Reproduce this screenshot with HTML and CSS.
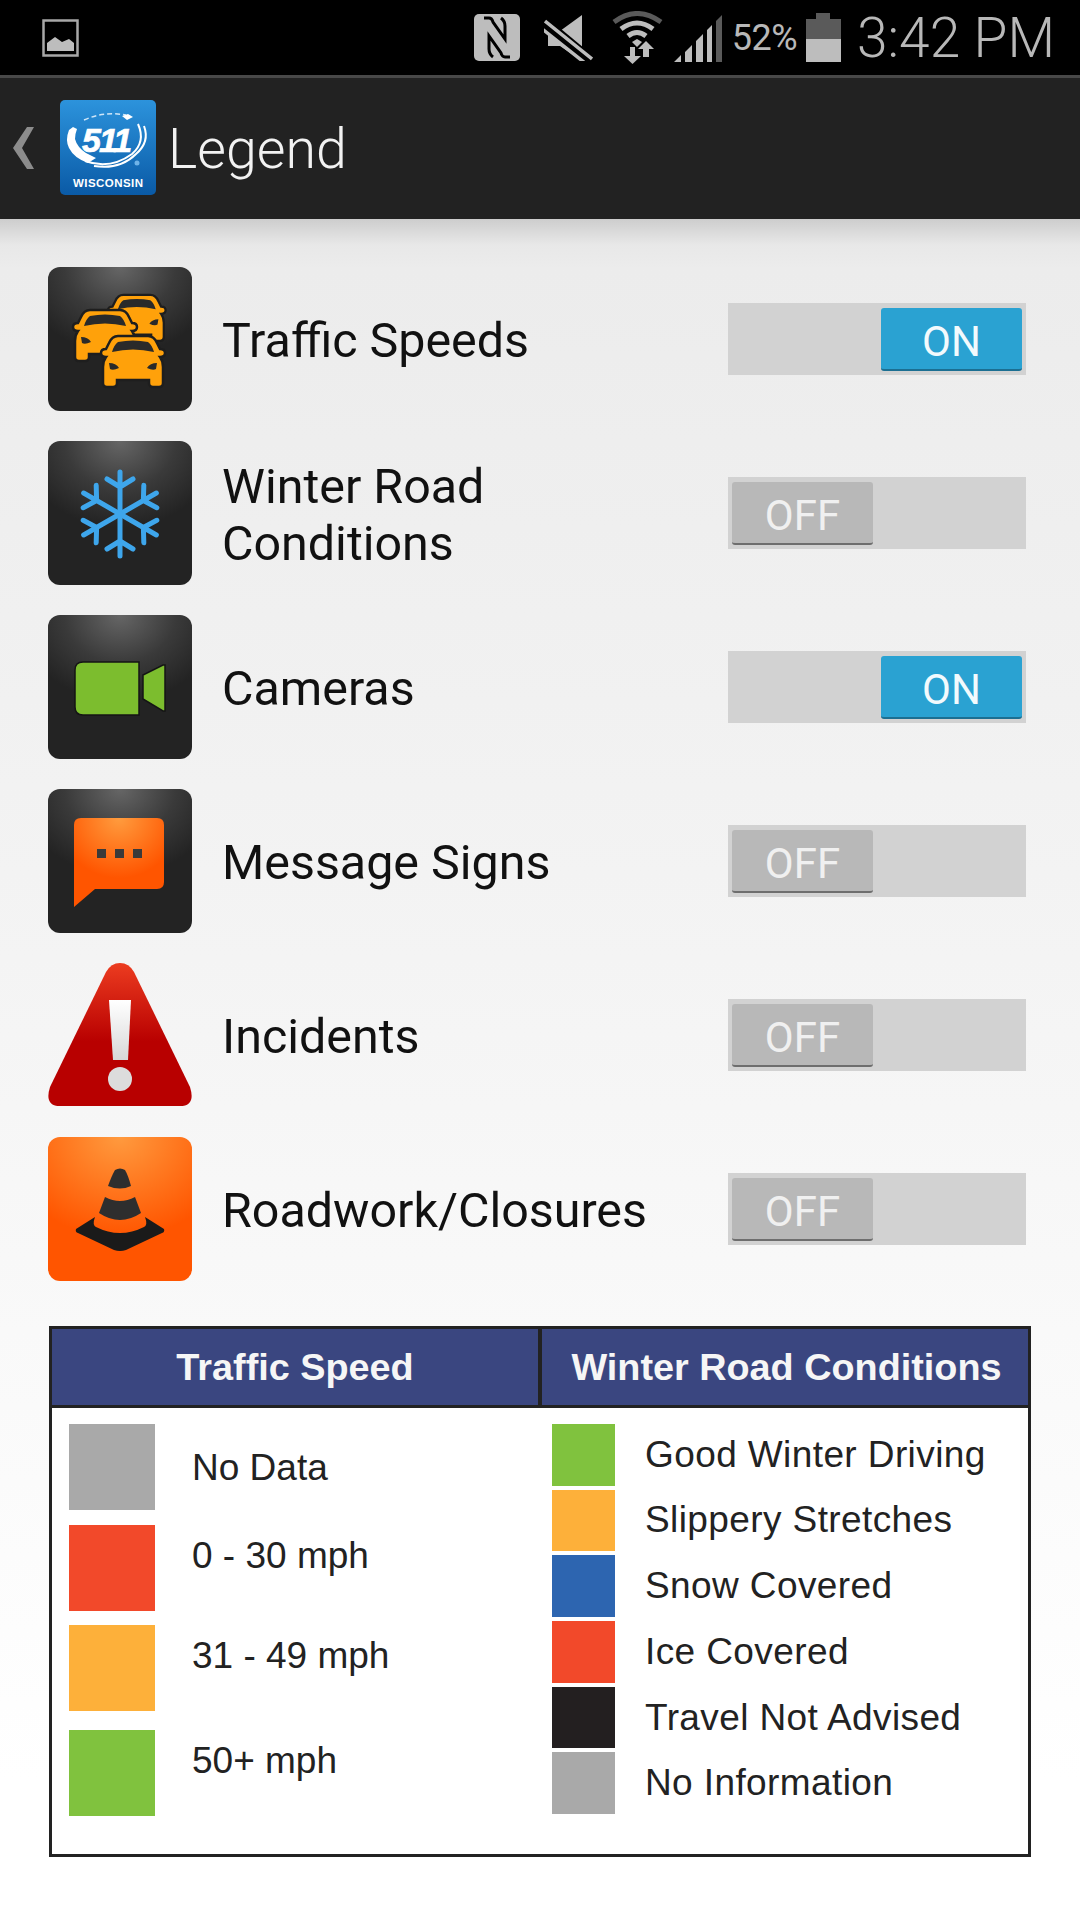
FILE: index.html
```html
<!DOCTYPE html>
<html>
<head>
    <title>511 Wisconsin – Legend</title>
    <link rel="stylesheet" href="styles.css">
</head>
<body>
    <div class="status-bar">
        <svg class="st-gallery" width="37" height="38" viewBox="0 0 37 38">
            <rect x="1.5" y="1.5" width="34" height="35" fill="none" stroke="#a8a8a8" stroke-width="2.5"/>
            <path d="M5 32 V24 L13 18 L20 23 L27 20 L32 24 V32Z" fill="#bdbdbd"/>
        </svg>
        <div class="st-spacer"></div>
        <svg class="st-nfc" width="46" height="47" viewBox="0 0 46 47">
            <rect width="46" height="47" rx="5" fill="#bdbdbd"/>
            <path d="M10 4 H15 Q18 4 19 8 L31 25 V12 Q31 7 27 4 M36 43 H31 Q28 43 27 39 L15 22 V35 Q15 40 19 43" fill="none" stroke="#000" stroke-width="3"/>
        </svg>
        <svg class="st-mute" width="49" height="47" viewBox="0 0 49 47">
            <path d="M4 17 H16 L38 1 V47 L16 32 H4Z" fill="#bdbdbd"/>
            <path d="M0 8 L47 47" stroke="#000" stroke-width="11"/>
            <path d="M1 7 L48 45 M-3 14 L41 49" stroke="#bdbdbd" stroke-width="3.5"/>
        </svg>
        <svg class="st-wifi" width="51" height="53" viewBox="0 0 51 53">
            <path d="M2 11 Q25 -6 49 11" fill="none" stroke="#5a5a5a" stroke-width="5"/>
            <path d="M9 18 Q25 6 41 18" fill="none" stroke="#bdbdbd" stroke-width="5"/>
            <path d="M16 25 Q25 18 34 25" fill="none" stroke="#bdbdbd" stroke-width="5"/>
            <path d="M20 31 L25 28 L30 31 L25 36Z" fill="#bdbdbd"/>
            <path d="M18 36 H23 V45 H29 L20.500 53 L12 45 H18Z M31 46 V38 H26 L34 30 L42 38 H37 V46Z" fill="#bdbdbd"/>
        </svg>
        <svg class="st-signal" width="48" height="48" viewBox="0 0 48 48">
            <path d="M0 48 L7 41 V48Z M11 38 L18 31 V48 H11Z M22 27 L29 20 V48 H22Z M33 16 L38 11 V48 H33Z" fill="#bdbdbd"/>
            <path d="M42 7 L48 1 V48 H42Z" fill="#5a5a5a"/>
        </svg>
        <span class="st-pct">52%</span>
        <svg class="st-battery" width="35" height="49" viewBox="0 0 35 49">
            <path d="M10 0 H24 V6 H35 V26 H0 V6 H10Z" fill="#5a5a5a"/>
            <rect y="26" width="35" height="23" fill="#bdbdbd"/>
        </svg>
        <span class="st-time">3:42 PM</span>
    </div>

    <div class="action-bar">
        <svg class="back" width="21" height="42" viewBox="0 0 21 42">
            <path d="M14 0 H21 L9 21 L21 42 H14 L0 21Z" fill="#8c8c8c"/>
        </svg>
        <svg class="logo" width="96" height="95" viewBox="0 0 96 95">
            <defs>
                <linearGradient id="logoBg" x1="0" y1="0" x2="0" y2="1">
                    <stop offset="0" stop-color="#2c93dc"/>
                    <stop offset="1" stop-color="#0a5aa6"/>
                </linearGradient>
            </defs>
            <rect width="96" height="95" rx="5" fill="url(#logoBg)"/>
            <path d="M24 20 Q44 11 66 15" fill="none" stroke="#cfe6f8" stroke-width="1.500" stroke-dasharray="5 3"/>
            <path d="M62 16 L68 14 L73 17 L67 20Z" fill="#fff"/>
            <path d="M9 30 Q5 40 9 48 Q14 58 28 63 L36 58 L26 53 Q17 47 15 39 Q15 34 17 29 L13 27Z" fill="#fff"/>
            <path d="M25 61 Q50 70 72 54 Q86 42 78 24 M34 66 Q60 70 76 54 Q90 42 84 26" fill="none" stroke="#fff" stroke-width="2"/>
            <text class="logo-num" x="22" y="52">511</text>
            <circle cx="77" cy="63" r="2.500" fill="#6fb3e8"/>
            <text class="logo-name" x="13" y="87" textLength="70">WISCONSIN</text>
        </svg>
        <span class="title">Legend</span>
    </div>

    <div class="content">
        <div class="layer">
            <div class="tile">
                <svg width="144" height="144" viewBox="0 0 144 144">
                    <defs>
                        <g id="car">
                            <path d="M17 1 H47 Q53 1 56 8 L59 14 Q64 14 64 18 Q64 22 59 22 Q62 26 62 32 V48 Q62 52 58 52 H52 Q48 52 48 48 V45 H16 V48 Q16 52 12 52 H6 Q2 52 2 48 V32 Q2 26 5 22 Q0 22 0 18 Q0 14 5 14 L8 8 Q11 1 17 1Z" fill="#ffa10a" stroke="#1e1e1e" stroke-width="2.500"/>
                            <path d="M17 7 Q32 4 47 7 Q51 10 53 17 Q32 12 11 17 Q13 10 17 7Z" fill="#2a2a2a"/>
                            <path d="M8 28 Q15 28 18 33 Q12 36 9 34Z M56 28 Q49 28 46 33 Q52 36 55 34Z" fill="#2a2a2a"/>
                        </g>
                    </defs>
                    <use href="#car" transform="translate(60 27) scale(.9)"/>
                    <use href="#car" transform="translate(25 42)"/>
                    <use href="#car" transform="translate(53 68)"/>
                </svg>
            </div>
            <span class="layer-name">Traffic Speeds</span>
            <div class="toggle on"><span class="thumb">ON</span></div>
        </div>

        <div class="layer">
            <div class="tile">
                <svg width="144" height="144" viewBox="0 0 144 144">
                    <defs>
                        <path id="arm" d="M0 0 V-42 M-13 -35 L0 -27 L13 -35" fill="none" stroke="#3ea6ec" stroke-width="5" stroke-linecap="round" stroke-linejoin="round"/>
                    </defs>
                    <g transform="translate(72 73)">
                        <use href="#arm"/>
                        <use href="#arm" transform="rotate(60)"/>
                        <use href="#arm" transform="rotate(120)"/>
                        <use href="#arm" transform="rotate(180)"/>
                        <use href="#arm" transform="rotate(240)"/>
                        <use href="#arm" transform="rotate(300)"/>
                    </g>
                </svg>
            </div>
            <span class="layer-name">Winter Road<br>Conditions</span>
            <div class="toggle"><span class="thumb">OFF</span></div>
        </div>

        <div class="layer">
            <div class="tile">
                <svg width="144" height="144" viewBox="0 0 144 144">
                    <path d="M35 47 H91 V100 H35 Q27 100 27 92 V55 Q27 47 35 47Z M95 60 L115 50 H117 V96 H115 L95 84Z" fill="#7cbd2e" stroke="#151515" stroke-width="1.500"/>
                </svg>
            </div>
            <span class="layer-name">Cameras</span>
            <div class="toggle on"><span class="thumb">ON</span></div>
        </div>

        <div class="layer">
            <div class="tile">
                <svg width="144" height="144" viewBox="0 0 144 144">
                    <defs>
                        <radialGradient id="msgBg" cx=".5" cy="0" r=".9">
                            <stop offset="0" stop-color="#ff9c3e"/>
                            <stop offset=".75" stop-color="#ff5500"/>
                        </radialGradient>
                    </defs>
                    <path d="M33 29 H109 Q116 29 116 36 V93 Q116 100 109 100 H47 L26 118 V36 Q26 29 33 29Z" fill="url(#msgBg)"/>
                    <path d="M49 60 H58 V69 H49Z M67 60 H76 V69 H67Z M85 60 H94 V69 H85Z" fill="#3a3a3a"/>
                </svg>
            </div>
            <span class="layer-name">Message Signs</span>
            <div class="toggle"><span class="thumb">OFF</span></div>
        </div>

        <div class="layer">
            <svg class="bare-icon" width="144" height="144" viewBox="0 0 144 144">
                <defs>
                    <linearGradient id="warnBg" x1="0" y1="0" x2="0" y2="1">
                        <stop offset="0" stop-color="#ec3c20"/>
                        <stop offset=".55" stop-color="#b80000"/>
                    </linearGradient>
                    <linearGradient id="warnBar" x1="0" y1="0" x2="0" y2="1">
                        <stop offset="0" stop-color="#fff"/>
                        <stop offset="1" stop-color="#d8d8d8"/>
                    </linearGradient>
                </defs>
                <path d="M72 0 Q81 0 86 9 L142 124 Q148 143 132 143 H12 Q-4 143 2 124 L58 9 Q63 0 72 0Z" fill="url(#warnBg)"/>
                <path d="M61 37 H83 L80 97 H65Z" fill="url(#warnBar)"/>
                <circle cx="72" cy="116" r="12" fill="#dcdcdc"/>
            </svg>
            <span class="layer-name">Incidents</span>
            <div class="toggle"><span class="thumb">OFF</span></div>
        </div>

        <div class="layer">
            <div class="tile tile-orange">
                <svg width="144" height="144" viewBox="0 0 144 144">
                    <path d="M67 33 Q72 30 77 33 Q80 38 83 49 Q72 54 60 49 Q64 38 67 33Z" fill="#2e2e2e"/>
                    <path d="M57 60 Q72 68 87 60 L93 76 Q72 90 51 76Z" fill="#2e2e2e"/>
                    <path d="M47 80 L28 92 Q27 95 30 96 L66 113 Q72 115 78 113 L114 96 Q117 95 116 92 L97 80 Q100 88 96 90 Q72 102 48 90 Q44 88 47 80Z" fill="#1a1a1a"/>
                </svg>
            </div>
            <span class="layer-name">Roadwork/Closures</span>
            <div class="toggle"><span class="thumb">OFF</span></div>
        </div>

        <div class="key">
            <div class="key-head">
                <div class="key-title speed-col">Traffic Speed</div>
                <div class="key-title winter-col">Winter Road Conditions</div>
            </div>
            <div class="key-body">
                <div class="speed-list">
                    <div class="speed-row"><span class="swatch-lg grey"></span><span class="speed-text first">No Data</span></div>
                    <div class="speed-row"><span class="swatch-lg red"></span><span class="speed-text">0 - 30 mph</span></div>
                    <div class="speed-row"><span class="swatch-lg orange"></span><span class="speed-text">31 - 49 mph</span></div>
                    <div class="speed-row wide"><span class="swatch-lg green"></span><span class="speed-text">50+ mph</span></div>
                </div>
                <div class="winter-list">
                    <div class="winter-row"><span class="swatch-sm green"></span>Good Winter Driving</div>
                    <div class="winter-row"><span class="swatch-sm orange"></span>Slippery Stretches</div>
                    <div class="winter-row"><span class="swatch-sm blue"></span>Snow Covered</div>
                    <div class="winter-row"><span class="swatch-sm red"></span>Ice Covered</div>
                    <div class="winter-row"><span class="swatch-sm black"></span>Travel Not Advised</div>
                    <div class="winter-row"><span class="swatch-sm grey"></span>No Information</div>
                </div>
            </div>
        </div>
    </div>
</body>
</html>
```

FILE: styles.css
```css
* {
    box-sizing: border-box;
}

body {
    margin: 0;
    height: 1920px;
    overflow: hidden;
    background: #fff;
    font-family: Roboto, sans-serif;
}

/* status bar */
.status-bar {
    display: flex;
    align-items: center;
    height: 75px;
    padding: 0 25px 0 42px;
    background: #000;
    color: #b8b8b8;
}

.status-bar svg {
    flex: none;
}

.st-spacer {
    flex: 1;
}

.st-mute {
    margin-left: 24px;
}

.st-wifi {
    margin-left: 19px;
}

.st-signal {
    margin-left: 11px;
}

.st-pct {
    margin-left: 10px;
    font-size: 36px;
    letter-spacing: -.5px;
}

.st-battery {
    margin-left: 9px;
}

.st-time {
    margin-left: 16px;
    font-size: 55px;
    font-weight: 300;
}

/* action bar */
.action-bar {
    display: flex;
    align-items: center;
    height: 144px;
    padding: 0 0 2px 13px;
    background: #222;
    border-top: 3px solid #484848;
}

.logo {
    margin-left: 26px;
}

.logo-num {
    font-family: "Liberation Sans", sans-serif;
    font-size: 34px;
    font-weight: bold;
    font-style: italic;
    letter-spacing: -2px;
    fill: #fff;
    stroke: #fff;
    stroke-width: .7px;
}

.logo-name {
    font-family: "Liberation Sans", sans-serif;
    font-size: 11.5px;
    font-weight: bold;
    fill: #fff;
}

.title {
    margin-left: 12px;
    padding-top: 4px;
    font-size: 55.5px;
    font-weight: 300;
    color: #f2f2f2;
}

/* layers */
.content {
    height: 1701px;
    padding: 48px 0 0 48px;
    background: linear-gradient(#cdcdcd 0, #e8e8e8 26px, #ececec 50px, #f4f4f4 740px, #fff 1560px);
}

.layer {
    display: flex;
    align-items: center;
    height: 144px;
    margin-bottom: 30px;
}

.tile {
    flex: none;
    width: 144px;
    height: 144px;
    border-radius: 12px;
    background: radial-gradient(ellipse 70% 60% at 50% 0, #666 0, #3a3a3a 55%, #232323 100%);
}

.tile-orange {
    background: radial-gradient(ellipse 80% 70% at 50% 0, #ff9a3e 0, #ff5500 100%);
}

.tile svg,
.bare-icon {
    display: block;
    flex: none;
}

.layer-name {
    flex: 1;
    margin-left: 30px;
    padding-top: 5px;
    font-size: 48.4px;
    line-height: 56.5px;
    color: #111;
}

.toggle {
    display: flex;
    flex: none;
    align-items: center;
    width: 298px;
    height: 72px;
    margin-right: 54px;
    padding: 0 4px;
    background: #d2d2d2;
}

.toggle.on {
    justify-content: flex-end;
}

.thumb {
    width: 141px;
    height: 63px;
    border-radius: 3px;
    background: #b8b8b8;
    border-bottom: 2px solid #6e6e6e;
    font-size: 42px;
    line-height: 67px;
    text-align: center;
    color: #f0f0f0;
}

.on .thumb {
    background: #2aa2d2;
    border-bottom-color: #1b6f92;
    color: #f2fafd;
}

/* colour key */
.key {
    width: 982px;
    height: 531px;
    margin: 45px 0 0 1px;
    border: 3px solid #222;
    background: #fff;
    font-family: "Liberation Sans", sans-serif;
}

.key-head {
    display: flex;
    height: 79px;
    border-bottom: 3px solid #222;
    background: #3a4680;
}

.key-title {
    font-size: 37.8px;
    font-weight: bold;
    line-height: 76px;
    text-align: center;
    color: #f6f6f6;
}

.speed-col {
    width: 490px;
    border-right: 4px solid #222;
}

.winter-col {
    flex: 1;
    padding-left: 3px;
}

.key-body {
    display: flex;
    padding-top: 16px;
    font-size: 37px;
    color: #222;
}

.speed-list {
    width: 500px;
    padding-left: 17px;
}

.speed-row {
    display: flex;
    align-items: center;
    margin-top: 14.5px;
}

.speed-row:first-child {
    margin-top: 0;
}

.speed-row.wide {
    margin-top: 19px;
}

.swatch-lg {
    flex: none;
    width: 86px;
    height: 86px;
}

.speed-text {
    margin-left: 37px;
    padding-bottom: 24px;
}

.speed-text.first {
    padding: 2px 0 0;
}

.winter-row {
    display: flex;
    align-items: center;
    margin-bottom: 4.2px;
    letter-spacing: .4px;
}

.swatch-sm {
    flex: none;
    width: 63px;
    height: 61.5px;
    margin-right: 30px;
}

.grey { background: #a9a9a9; }
.red { background: #f2492a; }
.orange { background: #fdb03a; }
.green { background: #80c23e; }
.blue { background: #2d65b0; }
.black { background: #231f20; }
```
